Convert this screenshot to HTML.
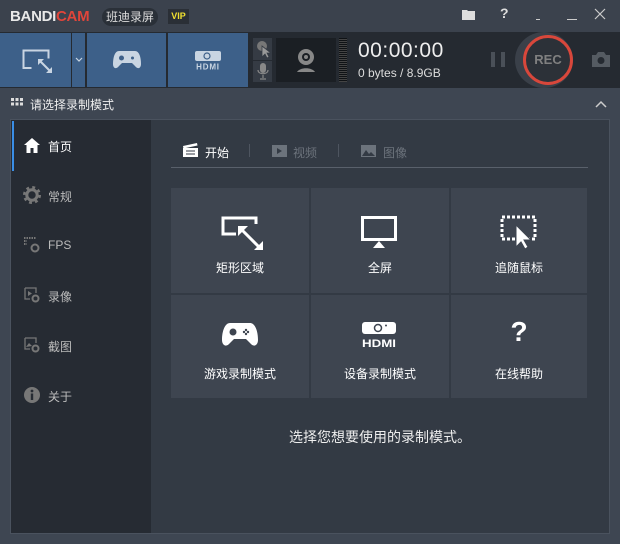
<!DOCTYPE html>
<html><head><meta charset="utf-8"><style>
*{margin:0;padding:0;box-sizing:border-box}
body{width:620px;height:544px;background:#3e4652;font-family:"Liberation Sans","Noto Sans CJK SC",sans-serif;position:relative;overflow:hidden;color:#fff}
.a{position:absolute}
.cn{font-size:12px}
</style></head><body>
<div class="a" style="left:0;top:0;width:620px;height:32px;background:#3b424d"></div>
<div class="a" style="left:10px;top:8px;font-weight:bold;font-size:15px;letter-spacing:-0.3px;color:#e8e8e8">BANDI<span style="color:#e0453a">CAM</span></div>
<div class="a cn" style="left:102px;top:8px;height:18px;width:56px;border-radius:9px;background:#2a3038;color:#ddd;text-align:center;line-height:18px">班迪录屏</div>
<div class="a" style="left:168px;top:9px;width:21px;height:15px;background:#2a2f36;color:#f0e030;font-size:9px;font-weight:bold;text-align:center;line-height:15px">VIP</div>
<svg class="a" style="left:462px;top:8px" width="14" height="12"><path d="M0 2h5l1 1h7v9H0z" fill="#ddd"/></svg>
<div class="a" style="left:500px;top:5px;font-size:14px;font-weight:bold;color:#ddd">?</div>
<div class="a" style="left:536px;top:19px;width:4px;height:1px;background:#ccc"></div>
<div class="a" style="left:567px;top:19px;width:10px;height:1px;background:#ccc"></div>
<svg class="a" style="left:594px;top:8px" width="12" height="12"><path d="M1 1L11 11M11 1L1 11" stroke="#ccc" stroke-width="1.2"/></svg>
<div class="a" style="left:0;top:32px;width:620px;height:56px;background:#252a31"></div>
<div class="a" style="left:0;top:33px;width:71px;height:54px;background:#3d6089"></div>
<div class="a" style="left:72px;top:33px;width:13px;height:54px;background:#3d6089"></div>
<div class="a" style="left:87px;top:33px;width:79px;height:54px;background:#3d6089"></div>
<div class="a" style="left:168px;top:33px;width:80px;height:54px;background:#3d6089"></div>
<svg class="a" style="left:22px;top:49px" width="32" height="24"><path d="M1.5 13V1.5h25v8" fill="none" stroke="#c9d5e2" stroke-width="2"/><path d="M1.5 13v6h8" fill="none" stroke="#c9d5e2" stroke-width="2"/><path d="M17 11l11 11" stroke="#c9d5e2" stroke-width="2"/><path d="M16 10h6l-6 6zM30 24h-6l6-6z" fill="#c9d5e2"/></svg>
<svg class="a" style="left:75px;top:57px" width="8" height="6"><path d="M1 1l3 3 3-3" stroke="#c9d5e2" fill="none" stroke-width="1.2"/></svg>
<svg class="a" style="left:113px;top:50px" width="28" height="20"><path d="M6 1h16c4 0 6 6 6 13 0 4-3 6-6 2l-3-3H9l-3 3c-3 4-6 2-6-2C0 7 2 1 6 1z" fill="#c9d5e2"/><circle cx="8.5" cy="8" r="2.5" fill="#3d6089"/><circle cx="19.5" cy="8" r="1.5" fill="#3d6089"/></svg>
<svg class="a" style="left:194px;top:51px" width="28" height="20"><rect x="1" y="0" width="26" height="10" rx="2" fill="#c9d5e2"/><circle cx="13" cy="5" r="3" fill="none" stroke="#3d6089" stroke-width="1.2"/><text x="14" y="18.5" font-size="8" font-weight="bold" text-anchor="middle" fill="#c9d5e2" font-family="Liberation Sans" letter-spacing="0.8">HDMI</text></svg>
<div class="a" style="left:253px;top:38px;width:19px;height:22px;background:#353b44"></div>
<div class="a" style="left:253px;top:61px;width:19px;height:21px;background:#353b44"></div>
<svg class="a" style="left:255px;top:40px" width="16" height="18"><circle cx="7" cy="6" r="5" fill="#777"/><path d="M7 6v11l3-3 2 4 2-1-2-4h4z" fill="#999" stroke="#353b44" stroke-width="0.8"/></svg>
<svg class="a" style="left:257px;top:62px" width="12" height="18"><rect x="3" y="1" width="6" height="10" rx="3" fill="#888"/><path d="M1 8c0 5 10 5 10 0M6 13v3M3 17h6" stroke="#888" fill="none" stroke-width="1.2"/></svg>
<div class="a" style="left:276px;top:38px;width:60px;height:44px;background:#1b1f24"></div>
<svg class="a" style="left:294px;top:46px" width="24" height="28"><circle cx="12" cy="11" r="8" fill="#888"/><circle cx="12" cy="11" r="4" fill="#1b1f24"/><circle cx="12" cy="11" r="2" fill="#888"/><path d="M3 26c3-5 15-5 18 0z" fill="#888"/></svg>
<div class="a" style="left:339px;top:38px;width:8px;height:44px;background:repeating-linear-gradient(#0f1215 0 1px,#444 1px 2px)"></div>
<div class="a" style="left:358px;top:39px;font-size:21px;color:#eee;letter-spacing:0.5px">00:00:00</div>
<div class="a" style="left:358px;top:66px;font-size:12px;color:#ddd">0 bytes / 8.9GB</div>
<div class="a" style="left:491px;top:52px;width:4px;height:15px;background:#4a5058"></div>
<div class="a" style="left:501px;top:52px;width:4px;height:15px;background:#4a5058"></div>
<div class="a" style="left:515px;top:32px;width:58px;height:56px;border-radius:50%;background:#3a4049"></div>
<div class="a" style="left:523px;top:35px;width:50px;height:50px;border-radius:50%;border:3px solid #d8473b;background:#2c3138"></div>
<div class="a" style="left:523px;top:52px;width:50px;text-align:center;font-size:13px;font-weight:bold;color:#808080">REC</div>
<svg class="a" style="left:592px;top:52px" width="18" height="15"><path d="M0 3h4l2-3h6l2 3h4v12H0z" fill="#555b62"/><circle cx="9" cy="8.5" r="3.5" fill="#252a31"/></svg>
<svg class="a" style="left:11px;top:98px" width="12" height="12"><g fill="#ddd"><rect x="0" y="0" width="3" height="3"/><rect x="4.5" y="0" width="3" height="3"/><rect x="9" y="0" width="3" height="3"/><rect x="0" y="4.5" width="3" height="3"/><rect x="4.5" y="4.5" width="3" height="3"/><rect x="9" y="4.5" width="3" height="3"/></g></svg>
<div class="a cn" style="left:30px;top:96px;color:#eee">请选择录制模式</div>
<svg class="a" style="left:595px;top:100px" width="12" height="8"><path d="M1 7l5-5 5 5" stroke="#ccc" fill="none" stroke-width="1.5"/></svg>
<div class="a" style="left:10px;top:119px;width:600px;height:415px;background:#4a525e"></div>
<div class="a" style="left:11px;top:120px;width:140px;height:413px;background:#262b33"></div>
<div class="a" style="left:151px;top:120px;width:458px;height:413px;background:#333a44"></div>
<div class="a" style="left:12px;top:121px;width:2px;height:50px;background:#3a8ee6"></div>
<svg class="a" style="left:24px;top:138px" width="16" height="15"><path d="M8 0l8 7h-2.5v8h-4v-5h-3v5h-4V7H0z" fill="#fff"/></svg>
<div class="a cn" style="left:48px;top:138px">首页</div>
<svg class="a" style="left:23px;top:186px" width="18" height="18"><circle cx="9" cy="9" r="7" fill="none" stroke="#777" stroke-width="4" stroke-dasharray="2.6 2.9"/><circle cx="9" cy="9" r="5.2" fill="none" stroke="#777" stroke-width="3"/></svg>
<div class="a cn" style="left:48px;top:188px;color:#bbb">常规</div>
<svg class="a" style="left:24px;top:237px" width="16" height="16"><path d="M0 1h12M0 4h3M0 7h3" stroke="#777" stroke-width="2" stroke-dasharray="1.5 1"/><circle cx="11" cy="11" r="3.5" fill="none" stroke="#777" stroke-width="2"/></svg>
<div class="a" style="left:48px;top:238px;font-size:12px;color:#bbb">FPS</div>
<svg class="a" style="left:24px;top:287px" width="16" height="16"><path d="M1 1h11v5M1 1v11h5" fill="none" stroke="#777" stroke-width="1.3"/><path d="M4 4l4 2.5L4 9z" fill="#777"/><circle cx="11.5" cy="11.5" r="3" fill="none" stroke="#777" stroke-width="2"/></svg>
<div class="a cn" style="left:48px;top:288px;color:#bbb">录像</div>
<svg class="a" style="left:24px;top:337px" width="16" height="16"><path d="M1 1h11v5M1 1v11h5" fill="none" stroke="#777" stroke-width="1.3"/><path d="M2 10l3-4 3 3z" fill="#777"/><circle cx="11.5" cy="11.5" r="3" fill="none" stroke="#777" stroke-width="2"/></svg>
<div class="a cn" style="left:48px;top:338px;color:#bbb">截图</div>
<svg class="a" style="left:24px;top:387px" width="16" height="16"><circle cx="8" cy="8" r="8" fill="#777"/><rect x="6.8" y="6.5" width="2.4" height="6.5" fill="#262b33"/><circle cx="8" cy="4" r="1.4" fill="#262b33"/></svg>
<div class="a cn" style="left:48px;top:388px;color:#bbb">关于</div>
<svg class="a" style="left:183px;top:143px" width="15" height="14"><path d="M0 5h15v9H0z" fill="#fff"/><path d="M0 3l14-3 .5 2.5L.5 5.5z" fill="#fff"/><path d="M3 8h9M3 11h9" stroke="#333a44"/></svg>
<div class="a cn" style="left:205px;top:144px;color:#fff">开始</div>
<div class="a" style="left:249px;top:144px;width:1px;height:13px;background:#4e5560"></div>
<svg class="a" style="left:272px;top:145px" width="15" height="12"><rect width="15" height="12" fill="#6c737c"/><path d="M5 3l5 3-5 3z" fill="#333a44"/></svg>
<div class="a cn" style="left:293px;top:144px;color:#6c737c">视频</div>
<div class="a" style="left:338px;top:144px;width:1px;height:13px;background:#4e5560"></div>
<svg class="a" style="left:361px;top:145px" width="15" height="12"><rect width="15" height="12" fill="#6c737c"/><path d="M1 11l4-6 3 4 2-2 4 4z" fill="#333a44"/></svg>
<div class="a cn" style="left:383px;top:144px;color:#6c737c">图像</div>
<div class="a" style="left:171px;top:167px;width:417px;height:1px;background:#59606b"></div>
<div class="a" style="left:171px;top:188px;width:138px;height:105px;background:#3e4550"></div>
<div class="a" style="left:311px;top:188px;width:138px;height:105px;background:#3e4550"></div>
<div class="a" style="left:451px;top:188px;width:136px;height:105px;background:#3e4550"></div>
<div class="a" style="left:171px;top:295px;width:138px;height:103px;background:#3e4550"></div>
<div class="a" style="left:311px;top:295px;width:138px;height:103px;background:#3e4550"></div>
<div class="a" style="left:451px;top:295px;width:136px;height:103px;background:#3e4550"></div>
<svg class="a" style="left:221px;top:216px" width="44" height="34"><path d="M15 18H2V2h33v6" fill="none" stroke="#fff" stroke-width="3"/><path d="M20 13l19 19" stroke="#fff" stroke-width="3"/><path d="M17 10h10L17 20zM42 35H32l10-10z" fill="#fff"/></svg>
<div class="a cn" style="left:171px;top:259px;width:138px;text-align:center">矩形区域</div>
<svg class="a" style="left:361px;top:216px" width="36" height="32"><rect x="1.5" y="1.5" width="33" height="22" fill="none" stroke="#fff" stroke-width="3"/><path d="M12 32l6-7 6 7z" fill="#fff"/></svg>
<div class="a cn" style="left:311px;top:259px;width:138px;text-align:center">全屏</div>
<svg class="a" style="left:500px;top:215px" width="38" height="34"><rect x="2" y="2" width="33" height="22" fill="none" stroke="#fff" stroke-width="3" stroke-dasharray="3 2"/><path d="M16 10v22l5-5 4 7 3-2-4-7h7z" fill="#fff" stroke="#3e4550" stroke-width="1"/></svg>
<div class="a cn" style="left:451px;top:259px;width:136px;text-align:center">追随鼠标</div>
<svg class="a" style="left:222px;top:322px" width="36" height="25"><path d="M8 1h20c5 0 8 8 8 17 0 5-4 8-8 3l-4-4H12l-4 4c-4 5-8 2-8-3C0 9 3 1 8 1z" fill="#fff"/><circle cx="11" cy="10" r="3.5" fill="#3e4550"/><circle cx="24" cy="8" r="1.2" fill="#3e4550"/><circle cx="24" cy="12" r="1.2" fill="#3e4550"/><circle cx="22" cy="10" r="1.2" fill="#3e4550"/><circle cx="26" cy="10" r="1.2" fill="#3e4550"/></svg>
<div class="a cn" style="left:171px;top:365px;width:138px;text-align:center">游戏录制模式</div>
<svg class="a" style="left:361px;top:322px" width="36" height="26"><rect x="1" y="0" width="34" height="12" rx="3" fill="#fff"/><circle cx="17" cy="6" r="3.5" fill="none" stroke="#3e4550" stroke-width="1.5"/><circle cx="25" cy="3.5" r="1" fill="#3e4550"/><text x="18" y="25" font-size="11" font-weight="bold" text-anchor="middle" fill="#fff" font-family="Liberation Sans" textLength="34" lengthAdjust="spacingAndGlyphs">HDMI</text></svg>
<div class="a cn" style="left:311px;top:365px;width:138px;text-align:center">设备录制模式</div>
<div class="a" style="left:451px;top:316px;width:136px;text-align:center;font-size:28px;font-weight:bold">?</div>
<div class="a cn" style="left:451px;top:365px;width:136px;text-align:center">在线帮助</div>
<div class="a" style="left:151px;top:427px;width:458px;text-align:center;font-size:14px;color:#eee">选择您想要使用的录制模式。</div>
</body></html>
